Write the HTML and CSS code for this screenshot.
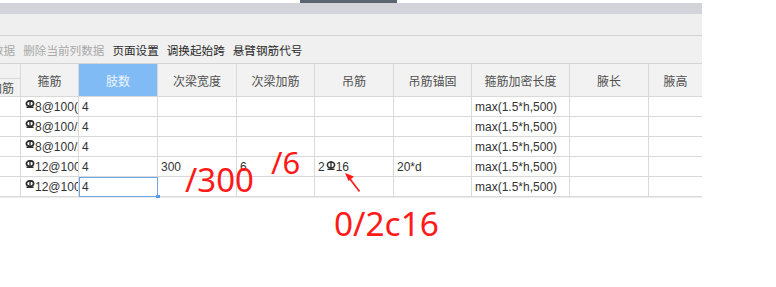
FILE: index.html
```html
<!DOCTYPE html>
<html lang="zh-CN">
<head>
    <meta charset="UTF-8">
    <meta name="viewport" content="width=device-width, initial-scale=1.0">
    <title>梁平法表格</title>
    <link rel="stylesheet" href="styles.css">
</head>
<body>
    <div class="panel">
        <div class="top-strip"><div class="tab-hang"></div></div>
        <div class="title-bar"></div>
        <div class="blank-bar"></div>

        <div class="toolbar">
            <span class="tool cut disabled">数据</span>
            <span class="tool disabled">删除当前列数据</span>
            <span class="tool">页面设置</span>
            <span class="tool">调换起始跨</span>
            <span class="tool">悬臂钢筋代号</span>
        </div>

        <div class="grid">
            <!-- header row -->
            <div class="cell hd hd-split">
                <div class="hd-top"></div>
                <div class="hd-bottom">架立加筋</div>
            </div>
            <div class="cell hd">箍筋</div>
            <div class="cell hd hd-active">肢数</div>
            <div class="cell hd">次梁宽度</div>
            <div class="cell hd">次梁加筋</div>
            <div class="cell hd">吊筋</div>
            <div class="cell hd">吊筋锚固</div>
            <div class="cell hd">箍筋加密长度</div>
            <div class="cell hd">腋长</div>
            <div class="cell hd">腋高</div>

            <!-- row 1 -->
            <div class="cell"></div>
            <div class="cell"><svg class="rebar" viewBox="0 0 10 8"><use href="#bar"/></svg>8@100(4)</div>
            <div class="cell">4</div>
            <div class="cell"></div>
            <div class="cell"></div>
            <div class="cell"></div>
            <div class="cell"></div>
            <div class="cell">max(1.5*h,500)</div>
            <div class="cell"></div>
            <div class="cell"></div>

            <!-- row 2 -->
            <div class="cell"></div>
            <div class="cell"><svg class="rebar" viewBox="0 0 10 8"><use href="#bar"/></svg>8@100/200(4)</div>
            <div class="cell">4</div>
            <div class="cell"></div>
            <div class="cell"></div>
            <div class="cell"></div>
            <div class="cell"></div>
            <div class="cell">max(1.5*h,500)</div>
            <div class="cell"></div>
            <div class="cell"></div>

            <!-- row 3 -->
            <div class="cell"></div>
            <div class="cell"><svg class="rebar" viewBox="0 0 10 8"><use href="#bar"/></svg>8@100/200(4)</div>
            <div class="cell">4</div>
            <div class="cell"></div>
            <div class="cell"></div>
            <div class="cell"></div>
            <div class="cell"></div>
            <div class="cell">max(1.5*h,500)</div>
            <div class="cell"></div>
            <div class="cell"></div>

            <!-- row 4 -->
            <div class="cell"></div>
            <div class="cell"><svg class="rebar" viewBox="0 0 10 8"><use href="#bar"/></svg>12@100/200(4)</div>
            <div class="cell">4</div>
            <div class="cell">300</div>
            <div class="cell">6</div>
            <div class="cell">2<svg class="rebar wide" viewBox="0 0 10 9"><use href="#bar-tall"/></svg>16</div>
            <div class="cell">20*d</div>
            <div class="cell">max(1.5*h,500)</div>
            <div class="cell"></div>
            <div class="cell"></div>

            <!-- row 5 -->
            <div class="cell"></div>
            <div class="cell"><svg class="rebar" viewBox="0 0 10 8"><use href="#bar"/></svg>12@100/200(4)</div>
            <div class="cell selected">4</div>
            <div class="cell"></div>
            <div class="cell"></div>
            <div class="cell"></div>
            <div class="cell"></div>
            <div class="cell">max(1.5*h,500)</div>
            <div class="cell"></div>
            <div class="cell"></div>
        </div>
        <div class="grid-end"></div>
    </div>

    <!-- hand-written notes on top of the screenshot -->
    <div class="note note-300">/300</div>
    <div class="note note-6">/6</div>
    <div class="note note-2c16">0/2c16</div>
    <svg class="arrow" width="30" height="30" viewBox="0 0 30 30">
        <line x1="17.5" y1="21.5" x2="8" y2="9" stroke="#ff1a1a" stroke-width="1.7"/>
        <polygon points="3,3 12,6.5 6.5,11" fill="#ff1a1a"/>
    </svg>

    <svg width="0" height="0" style="position:absolute">
        <defs>
            <g id="bar">
                <ellipse cx="5" cy="3.6" rx="3.6" ry="2.8" fill="none" stroke="currentColor" stroke-width="1.7"/>
                <line x1="5" y1="0" x2="5" y2="8" stroke="currentColor" stroke-width="1.4"/>
                <line x1="1.5" y1="7.3" x2="8.5" y2="7.3" stroke="currentColor" stroke-width="1.4"/>
            </g>
            <g id="bar-tall">
                <ellipse cx="5" cy="4" rx="3.6" ry="3" fill="none" stroke="currentColor" stroke-width="1.6"/>
                <line x1="5" y1="0" x2="5" y2="9" stroke="currentColor" stroke-width="1.4"/>
                <line x1="1.5" y1="8.3" x2="8.5" y2="8.3" stroke="currentColor" stroke-width="1.4"/>
            </g>
        </defs>
    </svg>
</body>
</html>
```

FILE: styles.css
```css
body { margin: 0; background: #fff; font-family: "Liberation Sans", "Noto Sans CJK SC", sans-serif; font-size: 12px; color: #333; }
.panel { width: 702px; position: relative; }

.top-strip { height: 3px; background: #fff; }
.tab-hang { margin-left: 300px; width: 97px; height: 3px; background: #5a6570; }
.title-bar { height: 11px; background: #d3d4d9; }
.blank-bar { height: 21px; background: #efefef; border-bottom: 1px solid #d2d2d2; }

.toolbar { height: 27px; background: #f0f0f0; border-bottom: 1px solid #d4d4d4; display: flex; align-items: center; gap: 8px; font-size: 11.6px; color: #2a2a2a; overflow: hidden; white-space: nowrap; }
.tool.cut { margin-left: -8px; }
.tool.disabled { color: #a8a8a8; }

.grid { display: grid; grid-template-columns: 21px 58px 79px 79px 78px 79px 78px 98px 79px 53px; grid-template-rows: 33px repeat(5, 20px); }
.cell { box-sizing: border-box; border-right: 1px solid #d9d9d9; border-bottom: 1px solid #d9d9d9; padding-left: 3px; display: flex; align-items: center; white-space: nowrap; overflow: hidden; background: #fff; position: relative; }
.cell:nth-child(10n) { border-right: none; }
.hd { background: #f2f2f2; justify-content: center; padding-left: 0; color: #505050; }
.hd-active { background: #80bbf6; color: #eef5ff; }
.hd-split { flex-direction: column; align-items: stretch; padding: 0; }
.hd-top { height: 15px; border-bottom: 1px solid #d9d9d9; }
.hd-bottom { flex: 1; display: flex; align-items: center; justify-content: flex-end; padding-right: 6px; }

.rebar { width: 10px; height: 8px; margin: 0 0 5px 1px; color: #2e2e2e; flex: none; }
.rebar.wide { width: 10px; height: 9px; margin: 0 0 3px 1px; }

.selected { overflow: visible; z-index: 2; }
.selected::after { content: ""; position: absolute; top: 0; left: 0; right: -1px; bottom: -1px; border: 1px solid #6fa7e6; }
.selected::before { content: ""; position: absolute; right: -3px; bottom: -3px; width: 4px; height: 4px; background: #5b9be0; z-index: 3; }

.grid-end { height: 1px; background: #ececec; }

.note { position: absolute; color: #ff1a1a; font-family: "Noto Sans", sans-serif; line-height: 1; white-space: nowrap; }
.note-300 { left: 185px; top: 163px; font-size: 33px; }
.note-6 { left: 271px; top: 147px; font-size: 31px; }
.note-2c16 { left: 334px; top: 207px; font-size: 33.4px; }
.arrow { position: absolute; left: 342px; top: 170px; }
```
